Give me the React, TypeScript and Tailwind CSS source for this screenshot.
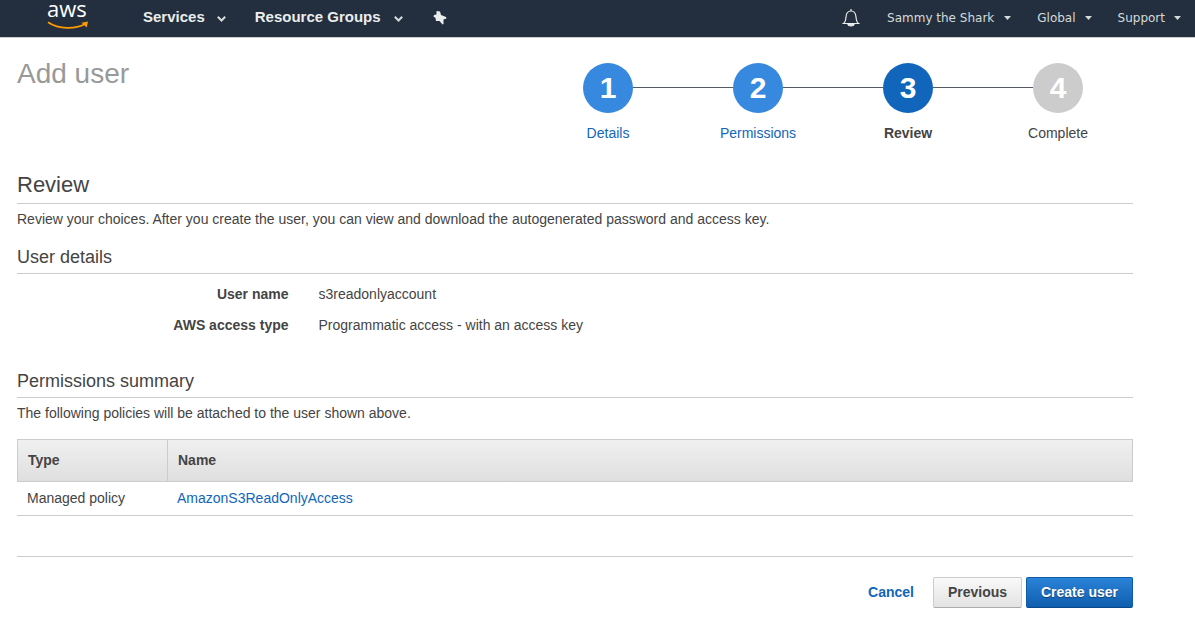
import React from "react";

const Chevron = ({ className = "" }: { className?: string }) => (
  <svg width="9" height="6" viewBox="0 0 9 6" className={className} fill="none" stroke="#d5dbdb" strokeWidth="2">
    <path d="M.8.8l3.7 3.7L8.2.8" />
  </svg>
);
const Caret = () => (
  <svg width="7" height="4" viewBox="0 0 7 4" fill="#d5dbdb" className="block">
    <path d="M0 0h7L3.5 4z" />
  </svg>
);

const Step = ({ n, bg }: { n: number; bg: string }) => (
  <div className={`w-[50px] h-[50px] shrink-0 rounded-full flex items-center justify-center text-white font-bold text-[30px] leading-none ${bg}`}>{n}</div>
);
const Line = () => <div className="w-[100px] h-px mb-px bg-[#545b64]" />;

const H2 = ({ children }: { children: React.ReactNode }) => (
  <h2 className="text-[18px] leading-[24px] text-[#444] border-b border-[#ccc] pb-[4px]">{children}</h2>
);

export default function App() {
  return (
    <div className="w-[1195px] h-[620px] overflow-hidden bg-white text-[#444] text-[14px] font-['Liberation_Sans',Arial,sans-serif]">
      <nav className="h-[38px] bg-[#232f3e] border-b border-[#ccc] flex items-center">
        <div className="ml-[47px] w-[42px] h-[37px] relative shrink-0">
          <span className="absolute left-0 top-0 text-white text-[22px] leading-[17px] font-medium font-['Open_Sans',sans-serif]">aws</span>
          <svg width="42" height="10" viewBox="0 0 42 10" className="absolute left-0 top-[20px]">
            <path d="M1 2.2C12 9.5 28 9.5 38 4" fill="none" stroke="#f90" strokeWidth="1.8" />
            <path d="M34.5 2.8l6.5-1.3-1.3 6z" fill="#f90" />
          </svg>
        </div>
        <span className="ml-[54px] mb-[2px] text-[#eaeded] font-bold text-[15px]">Services</span>
        <Chevron className="ml-[12px]" />
        <span className="ml-[29px] mb-[2px] text-[#eaeded] font-bold text-[15px]">Resource Groups</span>
        <Chevron className="ml-[13px]" />
        <svg width="14" height="14" viewBox="0 0 14 14" className="ml-[30px] mb-[2px]" fill="#eaeded">
          <path d="M3.5 0L7 .5 8 4l5 2 .5 1.5-3 1V13l-1 .5-3-3.5H3l-.5-3-2-1.5.5-1.5 2.5-.5z" />
        </svg>
        <div className="ml-auto flex items-center text-[12px] text-[#d5dbdb] font-['DejaVu_Sans',sans-serif]">
          <svg width="18" height="20" viewBox="0 0 18 20" fill="none" stroke="#eaeded" strokeWidth="1.2" className="mb-[2px]">
            <path d="M1.5 15.5c2-1.5 2.3-3.5 2.5-6.5.2-3.5 2-6 5-6s4.8 2.5 5 6c.2 3 .5 5 2.5 6.5z" />
            <path d="M9 1v2" />
            <path d="M6 16.5c.3 1.8 5.7 1.8 6 0z" fill="#eaeded" />
          </svg>
          <span className="ml-[27px] mb-[2px]">Sammy the Shark</span>
          <span className="ml-[10px] mb-[1px]"><Caret /></span>
          <span className="ml-[26px] mb-[2px]">Global</span>
          <span className="ml-[9px] mb-[1px]"><Caret /></span>
          <span className="ml-[26px] mb-[2px]">Support</span>
          <span className="ml-[9px] mr-[14px] mb-[1px]"><Caret /></span>
        </div>
      </nav>

      <main className="ml-[17px] w-[1116px]">
        <div className="flex justify-between">
          <h1 className="mt-[19px] text-[28px] leading-[34px] text-[#999]">Add user</h1>
          <div className="w-[600px] pt-[25px]">
            <div className="flex items-center px-[50px]">
              <Step n={1} bg="bg-[#3689de]" />
              <Line />
              <Step n={2} bg="bg-[#3689de]" />
              <Line />
              <Step n={3} bg="bg-[#1166bb]" />
              <Line />
              <Step n={4} bg="bg-[#cccccc]" />
            </div>
            <div className="grid grid-cols-4 mt-[11px] leading-[18px] text-center">
              <span className="text-[#1166bb]">Details</span>
              <span className="text-[#1166bb]">Permissions</span>
              <span className="font-bold">Review</span>
              <span>Complete</span>
            </div>
          </div>
        </div>

        <h2 className="mt-[29px] text-[22px] leading-[28px] text-[#444] border-b border-[#ccc] pb-[4px]">Review</h2>
        <p className="mt-[6px] leading-[18px]">Review your choices. After you create the user, you can view and download the autogenerated password and access key.</p>

        <div className="mt-[17px]"><H2>User details</H2></div>
        <dl className="mt-[11px] flex flex-col gap-[13px] leading-[18px]">
          <div className="flex">
            <dt className="w-[271.5px] text-right font-bold">User name</dt>
            <dd className="ml-[30px]">s3readonlyaccount</dd>
          </div>
          <div className="flex">
            <dt className="w-[271.5px] text-right font-bold">AWS access type</dt>
            <dd className="ml-[30px]">Programmatic access - with an access key</dd>
          </div>
        </dl>

        <div className="mt-[35px]"><H2>Permissions summary</H2></div>
        <p className="mt-[6px] leading-[18px]">The following policies will be attached to the user shown above.</p>

        <div className="mt-[17px] border-b border-[#ccc]">
          <div className="flex h-[43px] border border-[#ccc] bg-gradient-to-b from-[#f0f0f0] to-[#dfdfdf] font-bold items-center">
            <div className="w-[150px] h-full flex items-center pl-[10px] border-r border-[#ccc]">Type</div>
            <div className="pl-[10px]">Name</div>
          </div>
          <div className="flex h-[33px] items-center">
            <div className="w-[150px] pl-[10px]">Managed policy</div>
            <div className="pl-[10px] text-[#1166bb]">AmazonS3ReadOnlyAccess</div>
          </div>
        </div>

        <div className="mt-[40px] border-t border-[#ccc] pt-[20px] flex justify-end items-center">
          <span className="font-bold text-[#1166bb] mr-[19px]">Cancel</span>
          <button className="h-[31px] w-[89px] rounded-[2px] border border-[#ccc] border-b-[#aaa] bg-gradient-to-b from-[#f9f9f9] to-[#e3e3e3] font-bold text-[#444]">Previous</button>
          <button className="ml-[4px] h-[31px] w-[107px] rounded-[2px] border border-[#0f5ba5] border-b-[#0b4a8a] bg-gradient-to-b from-[#2a83d8] to-[#0f5eae] font-bold text-white [text-shadow:0_1px_1px_rgba(0,0,0,0.4)]">Create user</button>
        </div>
      </main>
    </div>
  );
}
